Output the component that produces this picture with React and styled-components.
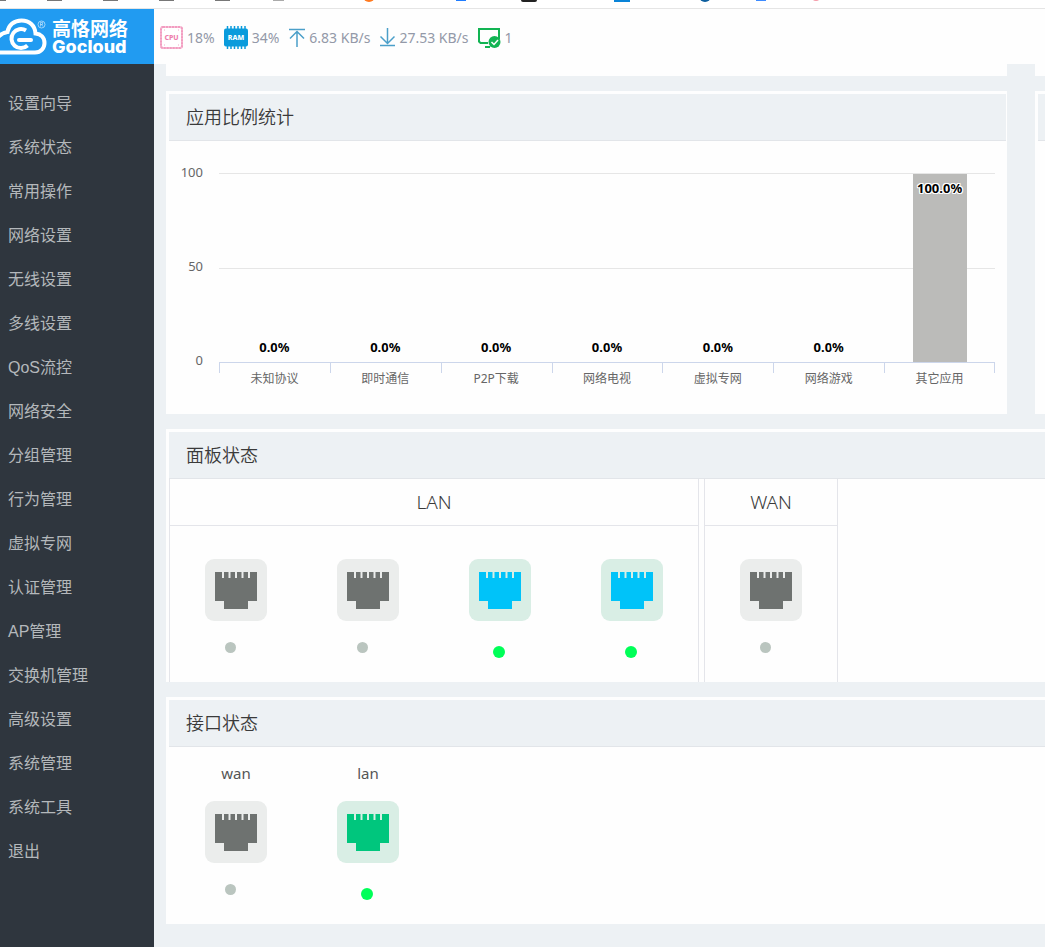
import styled, { createGlobalStyle } from 'styled-components';

const GlobalStyle = createGlobalStyle`
  *, *::before, *::after {
    box-sizing: border-box;
  }

  body {
    margin: 0;
    background-color: #edf1f4;
    color: #3a3a3a;
    font-family: 'Noto Sans', 'Noto Sans CJK SC', sans-serif;
    overflow-x: hidden;
  }
`;

const Page = styled.div`
  display: flex;
  flex-direction: column;
  min-height: 100vh;
`;

const BookmarkStrip = styled.div`
  height: 9px;
  background-color: #fff;
  border-bottom: 1px solid #e5e5e5;

  svg {
    display: block;
  }
`;

const Shell = styled.div`
  flex: 1;
  display: grid;
  grid-template-columns: 154px minmax(0, 1fr);
`;

const Sidebar = styled.aside`
  background-color: #2f363e;
`;

const Logo = styled.a`
  display: flex;
  align-items: center;
  gap: 5px;
  height: 55px;
  background-color: #219bf1;
  color: #fff;
  text-decoration: none;
`;

const LogoText = styled.span`
  display: flex;
  flex-direction: column;
`;

const LogoName = styled.span`
  font-size: 19px;
  font-weight: 700;
  line-height: 19px;
`;

const LogoLatin = styled.span`
  font-family: Inter, sans-serif;
  font-size: 18px;
  font-weight: 800;
  line-height: 15px;
`;

const Menu = styled.nav`
  display: flex;
  flex-direction: column;
  padding-top: 18px;
`;

const MenuLink = styled.a`
  padding-left: 8px;
  color: #b4b8bb;
  font-family: 'Liberation Sans', 'Noto Sans CJK SC', sans-serif;
  font-size: 16px;
  line-height: 44px;
  text-decoration: none;

  &:hover {
    color: #fff;
  }
`;

const Header = styled.header`
  display: flex;
  align-items: center;
  gap: 9px;
  height: 55px;
  padding: 2px 6px 0;
  background-color: #fefefe;
`;

const Stat = styled.span`
  display: flex;
  align-items: center;
  gap: 4px;
  color: #9399a8;
  font-size: 14px;
  line-height: 20px;
  white-space: nowrap;
`;

const Main = styled.main`
  display: flex;
  flex-direction: column;
  gap: 15px;
  padding: 0 0 23px 12px;
`;

const Row = styled.div`
  display: grid;
  grid-template-columns: minmax(0, 1fr) 10px;
  gap: 28px;
`;

const CardTail = styled.div`
  height: 12px;
  background-color: #fefefe;
`;

const Card = styled.section`
  padding: 3px ${({ $bleed }) => ($bleed ? '0' : '1px')} 0 3px;
  background-color: #fefefe;
  overflow: hidden;
`;

const CardTitle = styled.h2`
  height: 47px;
  margin: 0;
  padding-left: 17px;
  background-color: #edf1f4;
  border-bottom: 1px solid #e2e5e9;
  font-size: 18px;
  font-weight: 350;
  line-height: 46px;
  white-space: nowrap;
`;

const Chart = styled.div`
  display: grid;
  grid-template-columns: 34px minmax(0, 1fr);
  column-gap: 16px;
  padding: 32px 11px 24px 0;
`;

const YAxis = styled.div`
  display: flex;
  flex-direction: column;
  justify-content: space-between;
  height: 208px;
  margin-top: -11px;
  color: #666;
  font-size: 13px;
  line-height: 20px;
  text-align: right;
`;

const Plot = styled.div`
  display: grid;
  grid-template-rows: 190px auto;
`;

const GridLines = styled.div`
  grid-area: 1 / 1;
  display: grid;
  grid-template-rows: 1fr 1fr;
  border-bottom: 1px solid #ccd6eb;
`;

const GridLine = styled.div`
  border-top: 1px solid #e6e6e6;
`;

const Bars = styled.div`
  grid-area: 1 / 1;
  display: grid;
  grid-template-columns: repeat(7, 1fr);
  align-items: end;
  padding: 1px 0;
`;

const BarSlot = styled.div`
  display: flex;
  flex-direction: column;
  align-items: center;
  justify-content: flex-end;
  height: 100%;
`;

const Bar = styled.div`
  width: 54px;
  background-color: #bbbbb9;
`;

const BarValue = styled.span`
  display: block;
  margin: ${({ $inside }) => ($inside ? '4px 0 0' : '0 0 5px')};
  color: #000;
  font-size: 13px;
  font-weight: 700;
  line-height: 20px;
  text-align: center;
  text-shadow: 1px 0 #fff, -1px 0 #fff, 0 1px #fff, 0 -1px #fff, 1px 1px #fff,
    -1px -1px #fff, 1px -1px #fff, -1px 1px #fff;
`;

const Categories = styled.div`
  display: grid;
  grid-template-columns: repeat(7, 1fr);
`;

const Category = styled.span`
  height: 27px;
  padding-top: 6px;
  background: linear-gradient(#ccd6eb, #ccd6eb) left top / 1px 10px no-repeat;
  color: #666;
  font-size: 12px;
  line-height: 20px;
  text-align: center;

  &:last-child {
    background: linear-gradient(#ccd6eb, #ccd6eb) left top / 1px 10px no-repeat,
      linear-gradient(#ccd6eb, #ccd6eb) right top / 1px 10px no-repeat;
  }
`;

const PortGroups = styled.div`
  display: flex;
  gap: 5px;
`;

const PortGroup = styled.div`
  border: solid #e4e5ea;
  border-width: 0 1px;
`;

const GroupTitle = styled.h3`
  height: 47px;
  margin: 0;
  border-bottom: 1px solid #e4e5ea;
  font-size: 19px;
  font-weight: 350;
  line-height: 46px;
  text-align: center;
`;

const Ports = styled.div`
  display: flex;
  padding: ${({ $labelled }) => ($labelled ? '14px 0 24px 1px' : '33px 0 24px')};
`;

const PortCell = styled.div`
  display: flex;
  flex-direction: column;
  align-items: center;
  width: 132px;
`;

const PortLabel = styled.span`
  margin-bottom: 16px;
  color: #555;
  font-size: 15px;
  line-height: 24px;
`;

const Tile = styled.span`
  display: flex;
  align-items: center;
  justify-content: center;
  width: 62px;
  height: 62px;
  background-color: ${({ $on }) => ($on ? '#d9eee5' : '#ebedec')};
  border-radius: 9px;
`;

const Dot = styled.span`
  width: ${({ $on }) => ($on ? '12px' : '11px')};
  height: ${({ $on }) => ($on ? '12px' : '11px')};
  margin: ${({ $on }) => ($on ? '25px 2px 0 0' : '21px 11px 5px 0')};
  background-color: ${({ $on }) => ($on ? '#00ff58' : '#bac5bf')};
  border-radius: 50%;
`;

const OFF = '#6e7270';
const LINKED = '#00c3f9';
const ACTIVE = '#00c67d';

const menu = [
  '设置向导',
  '系统状态',
  '常用操作',
  '网络设置',
  '无线设置',
  '多线设置',
  'QoS流控',
  '网络安全',
  '分组管理',
  '行为管理',
  '虚拟专网',
  '认证管理',
  'AP管理',
  '交换机管理',
  '高级设置',
  '系统管理',
  '系统工具',
  '退出',
];

const apps = [
  { name: '未知协议', value: 0 },
  { name: '即时通信', value: 0 },
  { name: 'P2P下载', value: 0 },
  { name: '网络电视', value: 0 },
  { name: '虚拟专网', value: 0 },
  { name: '网络游戏', value: 0 },
  { name: '其它应用', value: 100 },
];

const panel = [
  { title: 'LAN', ports: [OFF, OFF, LINKED, LINKED] },
  { title: 'WAN', ports: [OFF] },
];

const BookmarkIcons = () => (
  <svg width="830" height="3" aria-hidden="true">
    {[-9, 47, 103, 159, 215].map((x) => (
      <rect key={x} x={x} y="-8" width="15" height="9" fill="#777" />
    ))}
    <rect x="273" y="-8" width="11" height="9" fill="#aaa" />
    <circle cx="369" cy="-4" r="6" fill="#ff7a20" />
    <rect x="456" y="-8" width="10" height="9" fill="#1f7cff" />
    <rect x="521" y="-8" width="16" height="10" rx="2" fill="#222" />
    <rect x="614" y="-8" width="16" height="10" fill="#0a84d8" />
    <circle cx="705" cy="-4" r="6" fill="#0c5e9e" />
    <rect x="756" y="-8" width="10" height="9" fill="#3d8bff" />
    <circle cx="816" cy="-3" r="4" fill="#f59aa8" />
  </svg>
);

const CloudLogo = () => (
  <svg width="47" height="40" viewBox="0 0 47 40" fill="none" stroke="#fff" aria-hidden="true">
    <path
      d="M-3 35.500H35C41 35.500 44.500 31 44.500 26C44.500 20.500 41 17 35.500 16.500C35 8.500 29.500 3.500 21.500 3.500C14 3.500 8.500 8 7.500 15C3 15.500 0 17.500 -3 21.500"
      strokeWidth="4"
    />
    <path d="M26 13.500A9.500 9.500 0 1 0 27.500 28.500" strokeWidth="4" />
    <path d="M19 23H31" strokeWidth="4" strokeLinecap="round" />
    <circle cx="41.500" cy="7.500" r="3.500" strokeWidth="0.800" opacity="0.700" />
    <path d="M40.500 9.500V5.500H42.500V7.500H40.500M41.500 7.500L43 9.500" strokeWidth="0.700" opacity="0.700" />
  </svg>
);

const CpuIcon = () => (
  <svg width="23" height="23" viewBox="0 0 23 23" aria-hidden="true">
    <rect x="1" y="1" width="21" height="21" rx="2" fill="#fff" stroke="#f7c0d7" strokeWidth="2" />
    <rect
      x="1"
      y="1"
      width="21"
      height="21"
      rx="2"
      fill="none"
      stroke="#f29cc0"
      strokeWidth="2"
      strokeDasharray="2 1"
    />
    <path d="M4 4h1M18 4h1M4 19h1M18 19h1" stroke="#f4a9c8" />
    <text x="11.500" y="14" textAnchor="middle" fontSize="7" fontWeight="800" fill="#ee7fae">
      CPU
    </text>
  </svg>
);

const RamIcon = () => (
  <svg width="24" height="23" viewBox="0 0 24 23" aria-hidden="true">
    <path d="M3.500 0V23M7 0V23M10.500 0V23M14 0V23M17.500 0V23M21 0V23" stroke="#0a9bdc" strokeWidth="1.500" />
    <rect x="0" y="2.500" width="24" height="18" rx="2" fill="#0a9bdc" />
    <text x="12" y="14" textAnchor="middle" fontSize="7" fontWeight="800" fill="#fff">
      RAM
    </text>
  </svg>
);

const UploadIcon = () => (
  <svg width="17" height="19" viewBox="0 0 17 19" fill="none" stroke="#4b9fc9" aria-hidden="true">
    <path d="M1 1.500H17" strokeWidth="1.500" />
    <path d="M9 19V4M2 10.500L9 3.500L16 10.500" strokeWidth="1.500" />
  </svg>
);

const DownloadIcon = () => (
  <svg width="16" height="19" viewBox="0 0 16 19" fill="none" stroke="#4b9fc9" aria-hidden="true">
    <path d="M1 17.500H16" strokeWidth="1.500" />
    <path d="M8.500 0V14.500M1.500 8.500L8.500 15.500L15.500 8.500" strokeWidth="1.500" />
  </svg>
);

const OnlineIcon = () => (
  <svg width="23" height="22" viewBox="0 0 23 22" fill="none" aria-hidden="true">
    <path d="M10 16H2.500L1 14.500V2H21V12" stroke="#12b453" strokeWidth="2" />
    <path d="M7 20H12" stroke="#12b453" strokeWidth="2" />
    <circle cx="16.500" cy="15" r="6" fill="#12b453" />
    <path d="M13.500 15L16 17.500L20 13" stroke="#fff" strokeWidth="1.500" />
  </svg>
);

const PortIcon = ({ color }) => (
  <svg width="42" height="37" viewBox="0 0 42 37" fill={color} aria-hidden="true">
    <path d="M0 0H7V6H9V0H13.500V6H15.500V0H20V6H22V0H26.500V6H28.500V0H33V6H35V0H42V29H33V37H9V29H0Z" />
  </svg>
);

const Port = ({ color, label }) => {
  const on = color !== OFF;

  return (
    <PortCell>
      {label && <PortLabel>{label}</PortLabel>}
      <Tile $on={on}>
        <PortIcon color={color} />
      </Tile>
      <Dot $on={on} />
    </PortCell>
  );
};

const AppChart = () => (
  <Chart>
    <YAxis>
      <span>100</span>
      <span>50</span>
      <span>0</span>
    </YAxis>
    <Plot>
      <GridLines>
        <GridLine />
        <GridLine />
      </GridLines>
      <Bars>
        {apps.map(({ name, value }) => (
          <BarSlot key={name}>
            {value > 0 ? (
              <Bar style={{ height: `${value}%` }}>
                <BarValue $inside>{value.toFixed(1)}%</BarValue>
              </Bar>
            ) : (
              <BarValue>{value.toFixed(1)}%</BarValue>
            )}
          </BarSlot>
        ))}
      </Bars>
      <Categories>
        {apps.map(({ name }) => (
          <Category key={name}>{name}</Category>
        ))}
      </Categories>
    </Plot>
  </Chart>
);

const App = () => {
  return (
    <Page>
      <GlobalStyle />
      <BookmarkStrip>
        <BookmarkIcons />
      </BookmarkStrip>
      <Shell>
        <Sidebar>
          <Logo href="#home">
            <CloudLogo />
            <LogoText>
              <LogoName>高恪网络</LogoName>
              <LogoLatin>Gocloud</LogoLatin>
            </LogoText>
          </Logo>
          <Menu>
            {menu.map((item) => (
              <MenuLink key={item} href={`#${item}`}>
                {item}
              </MenuLink>
            ))}
          </Menu>
        </Sidebar>
        <div>
          <Header>
            <Stat>
              <CpuIcon />
              18%
            </Stat>
            <Stat>
              <RamIcon />
              34%
            </Stat>
            <Stat>
              <UploadIcon />
              6.83 KB/s
            </Stat>
            <Stat>
              <DownloadIcon />
              27.53 KB/s
            </Stat>
            <Stat>
              <OnlineIcon />1
            </Stat>
          </Header>
          <Main>
            <Row>
              <CardTail />
              <CardTail />
            </Row>
            <Row>
              <Card>
                <CardTitle>应用比例统计</CardTitle>
                <AppChart />
              </Card>
              <Card $bleed>
                <CardTitle />
              </Card>
            </Row>
            <Card $bleed>
              <CardTitle>面板状态</CardTitle>
              <PortGroups>
                {panel.map(({ title, ports }) => (
                  <PortGroup key={title}>
                    <GroupTitle>{title}</GroupTitle>
                    <Ports>
                      {ports.map((color, i) => (
                        <Port key={i} color={color} />
                      ))}
                    </Ports>
                  </PortGroup>
                ))}
              </PortGroups>
            </Card>
            <Card $bleed>
              <CardTitle>接口状态</CardTitle>
              <Ports $labelled>
                <Port color={OFF} label="wan" />
                <Port color={ACTIVE} label="lan" />
              </Ports>
            </Card>
          </Main>
        </div>
      </Shell>
    </Page>
  );
};

export default App;
